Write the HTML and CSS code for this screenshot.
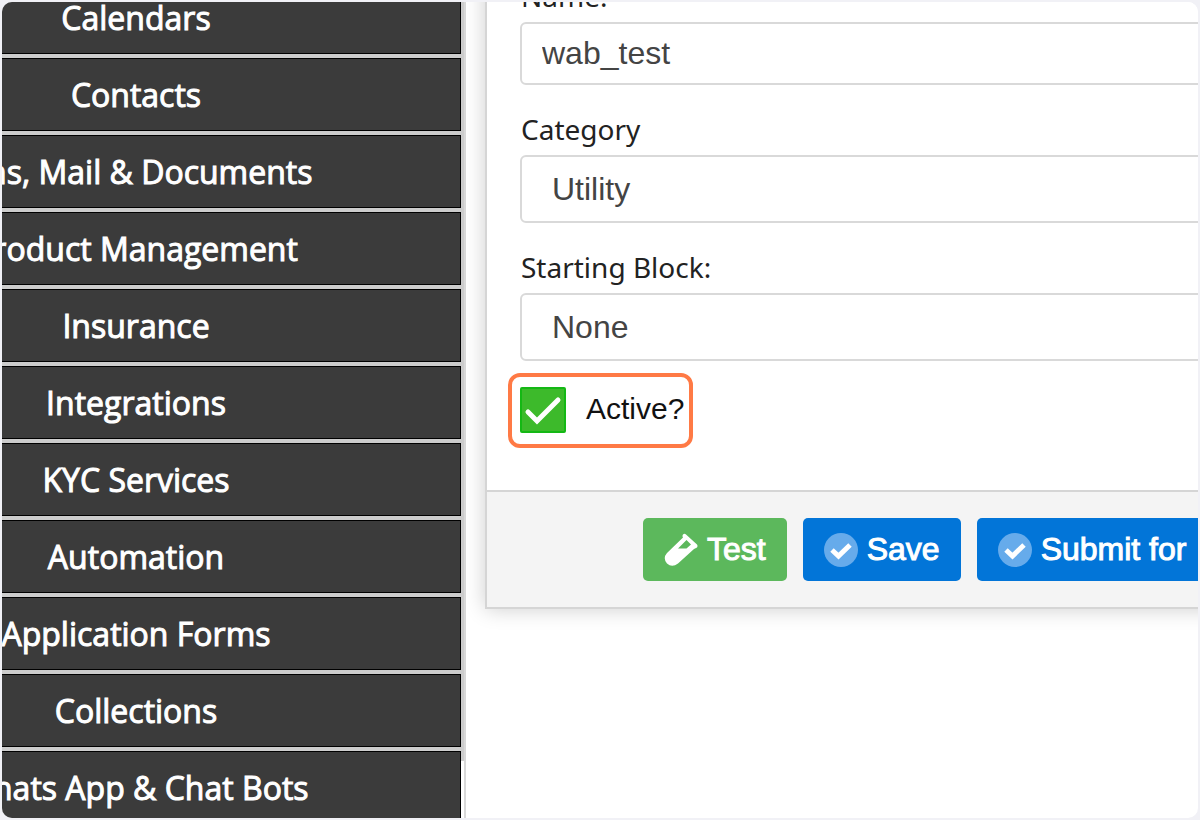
FILE: index.html
```html
<!DOCTYPE html>
<html lang="en">
<head>
    <meta charset="UTF-8">
    <meta name="viewport" content="width=device-width, initial-scale=1.0">
    <title>Chat Bot</title>
    <link rel="stylesheet" href="styles.css">
</head>
<body>
    <div class="window">
        <nav class="sidebar">
            <ul class="menu">
                <li><a href="#">Calendars</a></li>
                <li><a href="#">Contacts</a></li>
                <li><a href="#">Sms, Mail &amp; Documents</a></li>
                <li><a href="#">Product Management</a></li>
                <li><a href="#">Insurance</a></li>
                <li><a href="#">Integrations</a></li>
                <li><a href="#">KYC Services</a></li>
                <li><a href="#">Automation</a></li>
                <li><a href="#">Application Forms</a></li>
                <li><a href="#">Collections</a></li>
                <li><a href="#">Whats App &amp; Chat Bots</a></li>
            </ul>
            <div class="scrollbar"><div class="thumb"></div></div>
        </nav>
        <main>
            <form class="panel">
                <div class="panel-body">
                    <label class="field-label" for="name">Name:</label>
                    <input class="field" type="text" id="name" value="wab_test">
                    <label class="field-label" for="category">Category</label>
                    <select class="field" id="category">
                        <option>Utility</option>
                    </select>
                    <label class="field-label" for="starting-block">Starting Block:</label>
                    <select class="field" id="starting-block">
                        <option>None</option>
                    </select>
                    <label class="active-check" for="active">
                        <span class="check-box">
                            <input type="checkbox" id="active" checked>
                            <svg viewBox="0 0 46 46"><path d="M8 25 L17 34 L38 13" fill="none" stroke="#fff" stroke-width="5" stroke-linecap="round"/></svg>
                        </span>
                        <span class="check-text">Active?</span>
                    </label>
                </div>
                <div class="panel-footer">
                    <button type="button" class="btn btn-test">
                        <svg viewBox="0 0 34 34"><path fill="#fff" fill-rule="evenodd" d="M19 1.500 Q20.500 0 22 1.500 L33 11.500 Q34 13 33 14.500 L30 16 L14 30.500 Q8 35 3 30.500 Q-1.500 25 3 20 L19 4.500 Q18 3 19 1.500 Z M22.500 7 L14 15.500 L22.500 15.500 L27 11.500 Z"/></svg>
                        <span>Test</span>
                    </button>
                    <button type="button" class="btn btn-save">
                        <svg viewBox="0 0 34 34"><circle cx="17" cy="17" r="17" fill="#66abeb"/><path d="M8 17 L14.500 23 L26 12" fill="none" stroke="#fff" stroke-width="5"/></svg>
                        <span>Save</span>
                    </button>
                    <button type="button" class="btn btn-save">
                        <svg viewBox="0 0 34 34"><circle cx="17" cy="17" r="17" fill="#66abeb"/><path d="M8 17 L14.500 23 L26 12" fill="none" stroke="#fff" stroke-width="5"/></svg>
                        <span>Submit for</span>
                    </button>
                </div>
            </form>
        </main>
    </div>
</body>
</html>
```
FILE: styles.css
```css
* {
    box-sizing: border-box;
}

body {
    margin: 0;
    padding: 2px;
    height: 100vh;
    background-color: #f1f1f6;
    font-family: "Noto Sans", sans-serif;
}

.window {
    display: flex;
    height: 100%;
    overflow: hidden;
    background-color: #fff;
    border-radius: 10px;
}

.sidebar {
    display: flex;
    flex: none;
    width: 464px;
    overflow: hidden;
    justify-content: flex-end;
}

/* the menu is scrolled, its left and top parts are out of view */
.menu {
    display: flex;
    flex-direction: column;
    flex: none;
    gap: 4px;
    width: 650px;
    margin: -21px 0 0;
    padding: 0;
    list-style: none;
    background-color: #ccc;
}

.menu a {
    display: block;
    height: 73px;
    border: 1px solid #000;
    background-color: #3b3b3b;
    color: #fff;
    font-family: "Open Sans", sans-serif;
    font-size: 32px;
    line-height: 71px;
    text-align: center;
    text-decoration: none;
    white-space: nowrap;
    -webkit-text-stroke: 1px #fff;
}

.scrollbar {
    flex: none;
    width: 5px;
    border-right: 2px solid #d8d8d8;
}

.thumb {
    height: 93%;
    background-color: #ccc;
}

main {
    flex: 1;
    min-width: 0;
    padding-left: 19px;
    overflow: hidden;
}

.panel {
    margin: -50px -40px 0 0;
    border: 2px solid #d5d5d5;
    border-top: 0;
    box-shadow: 0 0 20px rgba(0, 0, 0, 0.2);
}

.panel-body {
    display: flex;
    flex-direction: column;
    align-items: flex-start;
    padding: 0 0 42px 33px;
    background-color: #fff;
}

.field-label {
    padding: 22px 0 4px 1px;
    color: #222;
    font-size: 28px;
    line-height: 44px;
}

.field {
    width: 100%;
    height: 68px;
    padding: 0 30px;
    border: 2px solid #d9d9d9;
    border-radius: 6px;
    background-color: #fff;
    color: #444;
    font-family: "Liberation Sans", sans-serif;
    font-size: 32px;
    appearance: none;
}

input.field {
    height: 63px;
    padding: 0 20px;
}

.active-check {
    display: flex;
    gap: 20px;
    margin: 12px 0 0 -12px;
    padding: 10px 5px 11px 8px;
    border: 4px solid #ff7a45;
    border-radius: 12px;
}

.check-box {
    display: grid;
    width: 46px;
    height: 46px;
}

.check-box input,
.check-box svg {
    grid-area: 1 / 1;
    width: 46px;
    height: 46px;
    margin: 0;
}

.check-box input {
    appearance: none;
    border: 2px solid #14b814;
    border-radius: 2px;
    background-color: #3dba2b;
}

.check-box svg {
    position: relative;
    pointer-events: none;
}

.check-text {
    color: #111;
    font-family: "Liberation Sans", sans-serif;
    font-size: 30px;
    line-height: 44px;
}

.panel-footer {
    display: flex;
    gap: 16px;
    padding: 26px 0 26px 156px;
    border-top: 2px solid #d5d5d5;
    background-color: #f4f4f4;
}

.btn {
    display: flex;
    flex: none;
    align-items: center;
    gap: 9px;
    height: 63px;
    padding: 0 21px;
    border: 0;
    border-radius: 5px;
    color: #fff;
    font-family: "Liberation Sans", sans-serif;
    font-size: 32px;
    white-space: nowrap;
    -webkit-text-stroke: 1px #fff;
}

.btn svg {
    width: 34px;
    height: 34px;
}

.btn-test {
    background-color: #5cb85c;
}

.btn-save {
    background-color: #0275d8;
}
```
